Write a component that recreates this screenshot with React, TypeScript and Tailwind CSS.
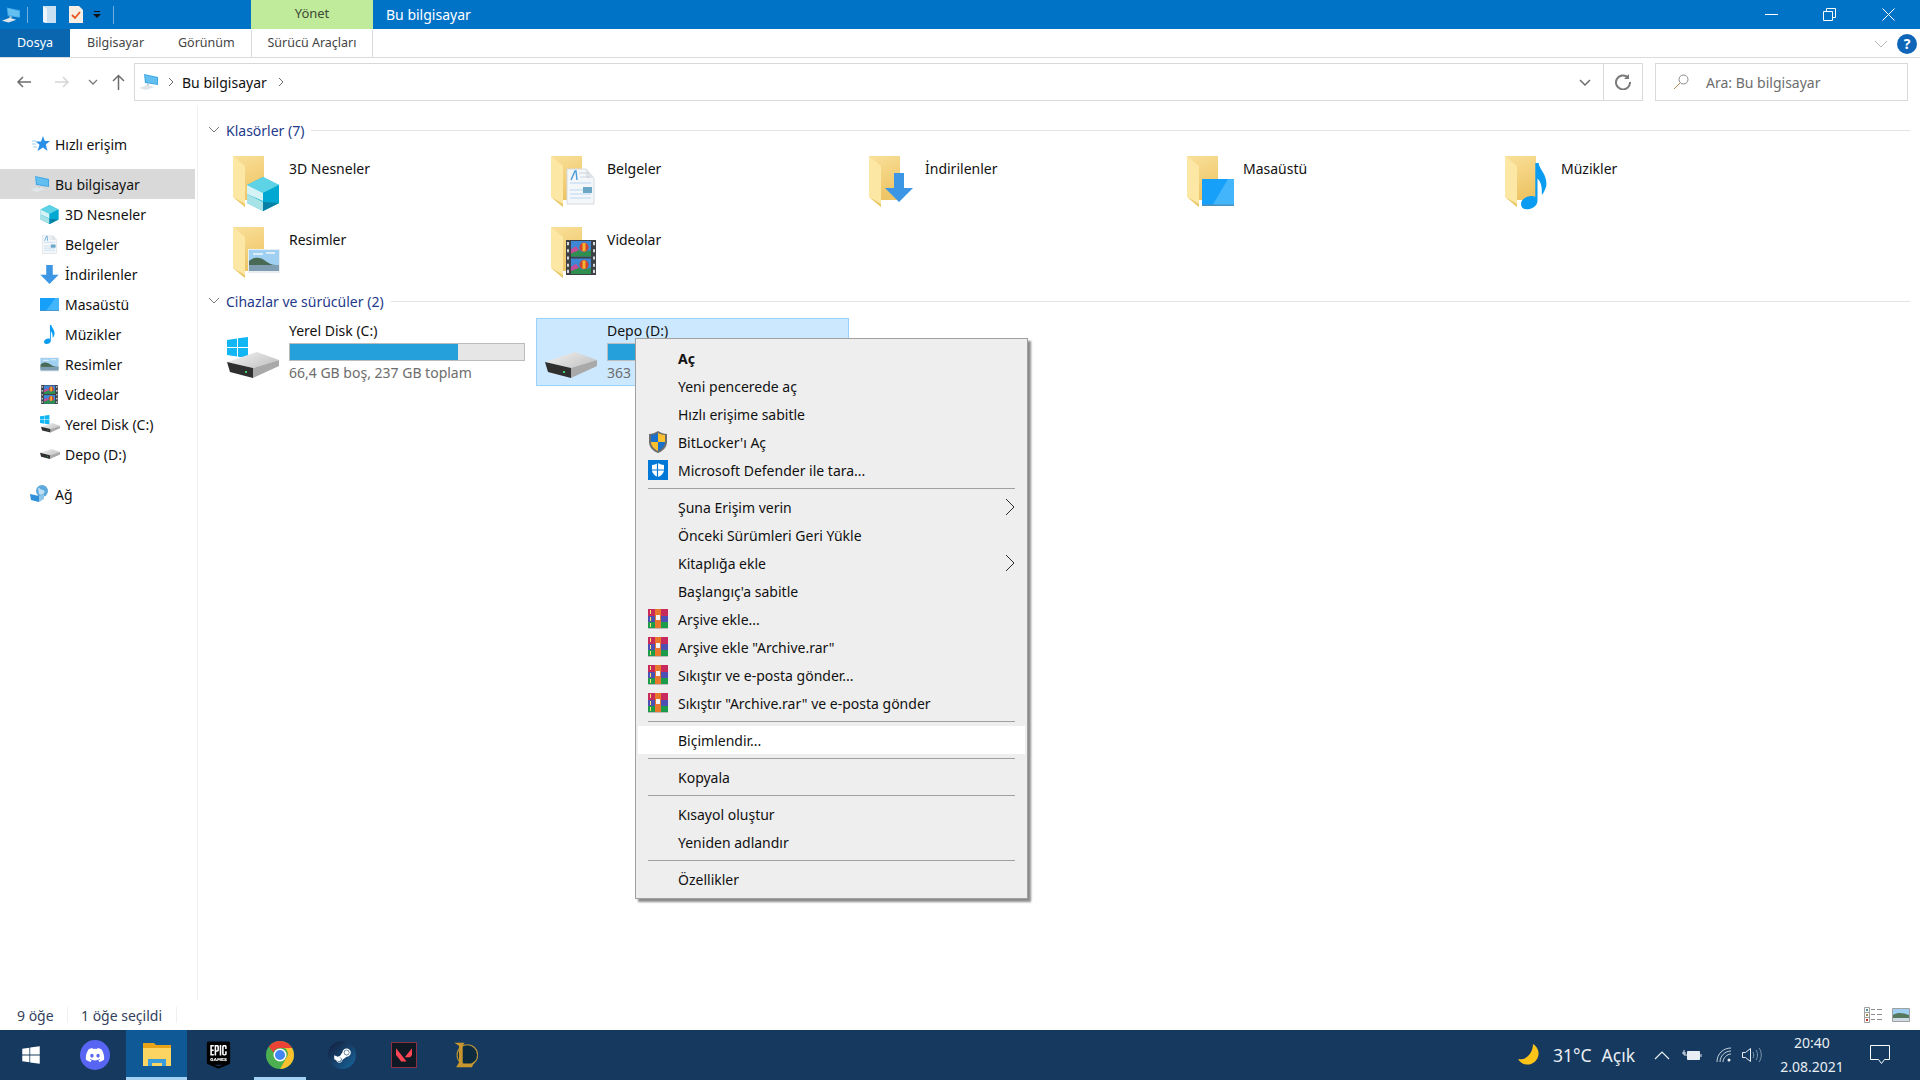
import React from "react";
import { FaWindows, FaDiscord, FaSteamSymbol } from "react-icons/fa";
import { SiEpicgames, SiValorant } from "react-icons/si";

type IconProps = { className?: string };

function FolderBase() {
  return (
    <g>
      <defs>
        <linearGradient id="folderBack" x1="0" y1="0" x2="0.3" y2="1">
          <stop offset="0" stopColor="#f9e09a" />
          <stop offset="1" stopColor="#eec566" />
        </linearGradient>
      </defs>
      <path d="M0 1h31v44H8z" fill="url(#folderBack)" />
      <path d="M0 1l12 10v41L0 42z" fill="#fde7a4" />
      <path d="M0 42l12 10v-3z" fill="#e8c767" />
    </g>
  );
}

function Cube() {
  return (
    <g>
      <path d="M0 8L16 0l16 8v18l-16 8-16-8z" fill="#20b5d6" />
      <path d="M0 8l16 8 16-8L16 0z" fill="#5fd3e6" />
      <path d="M0 8l16 8v8L0 17z" fill="#d5f3f5" />
      <path d="M0 17l16 8v9L0 26z" fill="#a7e3e6" />
      <path d="M16 16l16-8v18l-16 8z" fill="#00a8d2" />
      <path d="M16 25l16 1-16 8z" fill="#0880a6" />
    </g>
  );
}

function Doc() {
  return (
    <g>
      <path d="M0 0h19l8 9v26H0z" fill="#f4f7fa" stroke="#d5d9dd" />
      <path d="M19 0l8 9h-8z" fill="#dfe4e8" />
      <path d="M3 14h21M3 21h13M3 25h21M3 29h21" stroke="#b7d6ee" strokeWidth="1.2" />
      <path d="M4 11l4-9h1l1 9" fill="none" stroke="#4a9bd8" strokeWidth="1.4" />
      <path d="M12 4h10M13 8h10" stroke="#cbd3da" />
      <path d="M16 18h9v6h-9z" fill="#6aa7c7" />
    </g>
  );
}

function DownArrow() {
  return <path d="M9 0h10v15h9L14 29 0 15h9z" fill="#3d96e4" />;
}

function Desktop() {
  return (
    <g>
      <path d="M0 0h32v27H0z" fill="#16a0fa" />
      <path d="M10 27L26 0h6v27z" fill="#43b5fb" />
      <path d="M0 25.500h32V27H0z" fill="#4a8fbe" />
    </g>
  );
}

function Note() {
  return (
    <path
      d="M13 0h3c1 7 8 10 7 21-1 3-2 6-4 8 0-6 0-11-4-15v20c0 5-5 8-10 8-4 0-5-3-5-5 0-4 5-7 9-7 2 0 3 0 4 1z"
      fill="#0a9cf0"
    />
  );
}

function Picture() {
  return (
    <g>
      <path d="M0 0h32v24H0z" fill="#e9eef3" />
      <path d="M1 1h30v21H1z" fill="#9fd0f2" />
      <path d="M5 4h10v2H5zM18 3h9v2h-9z" fill="#dcedf8" />
      <path d="M1 12c6-5 12-4 18 1 4 3 8 3 12 3v3H1z" fill="#496b55" />
      <path d="M1 16h30v6H1z" fill="#7f9db0" />
    </g>
  );
}

function Film() {
  return (
    <g>
      <path d="M0 0h30v34H0z" fill="#3d4045" />
      <path d="M5 1h20v15H5zM5 18h20v15H5z" fill="#3d87d6" />
      <path d="M5 11l6-3 5 4 9-2v6H5zM5 28l6-3 5 4 9-2v6H5z" fill="#2f8f4f" />
      <path d="M5 9l5-3 3 4-8 3zM5 26l5-3 3 4-8 3z" fill="#c44d9a" />
      <circle cx="18" cy="7" r="4.500" fill="#d4432a" />
      <circle cx="18" cy="24" r="4.500" fill="#d4432a" />
      <path d="M16.500 3h3v8h-3zM16.500 20h3v8h-3z" fill="#f2b632" />
      <path d="M1 2h2v3H1zM1 9h2v3H1zM1 16h2v3H1zM1 23h2v3H1zM1 29h2v3H1zM27 2h2v3h-2zM27 9h2v3h-2zM27 16h2v3h-2zM27 23h2v3h-2zM27 29h2v3h-2z" fill="#d8dade" />
    </g>
  );
}

function Folder({ kind }: { kind: string }) {
  return (
    <svg viewBox="0 0 52 56" className="h-[56px] w-[52px] shrink-0">
      <FolderBase />
      {kind === "cube" && (
        <g transform="translate(14 22)">
          <Cube />
        </g>
      )}
      {kind === "doc" && (
        <g transform="translate(16 14)">
          <Doc />
        </g>
      )}
      {kind === "arrow" && (
        <g transform="translate(16 18)">
          <DownArrow />
        </g>
      )}
      {kind === "desktop" && (
        <g transform="translate(15 24)">
          <Desktop />
        </g>
      )}
      {kind === "note" && (
        <g transform="translate(16 8) scale(1.1)">
          <Note />
        </g>
      )}
      {kind === "picture" && (
        <g transform="translate(15 23)">
          <Picture />
        </g>
      )}
      {kind === "film" && (
        <g transform="translate(15 14) scale(1 1.03)">
          <Film />
        </g>
      )}
    </svg>
  );
}

function HddShape() {
  return (
    <g>
      <defs>
        <linearGradient id="hddTop" x1="0" y1="0" x2="1" y2="0.6">
          <stop offset="0" stopColor="#f4f4f4" />
          <stop offset="1" stopColor="#c6c6c6" />
        </linearGradient>
      </defs>
      <path d="M0 10L30 0l22 8-26 8z" fill="url(#hddTop)" />
      <path d="M0 10l26 6v10L3 20z" fill="#2f2f2f" />
      <path d="M26 16l26-8v6L26 26z" fill="#a9a9a9" />
      <rect x="18" y="19" width="2" height="2" fill="#3fd06a" />
    </g>
  );
}

function Hdd({ className }: IconProps) {
  return (
    <svg viewBox="0 0 52 26" className={className}>
      <HddShape />
    </svg>
  );
}

function WinPanes({ x, y, s }: { x: number; y: number; s: number }) {
  return (
    <g transform={`translate(${x} ${y}) scale(${s})`}>
      <path d="M0 3l10-1.500V10H0zM11 1.300L21 0v10H11zM0 11h10v8.500L0 18zM11 11h10v10l-10-1.300z" fill="#12b6f3" />
    </g>
  );
}

function WinDrive() {
  return (
    <svg viewBox="0 0 52 41" className="h-[41px] w-[52px] shrink-0">
      <WinPanes x={0} y={0} s={1} />
      <g transform="translate(0 15)">
        <HddShape />
      </g>
    </svg>
  );
}

function Computer({ className }: IconProps) {
  return (
    <svg viewBox="0 0 20 18" className={className}>
      <path d="M5 1l14 3v8L6 10z" fill="#3fa7e8" />
      <path d="M6 2l12 3v6L7 9z" fill="#62bff0" />
      <path d="M0 15l8-3 7 2-8 3z" fill="#dfe6ea" />
      <path d="M8 10l2 .5v2.500l-2-.5z" fill="#c5ced4" />
    </svg>
  );
}

function Star({ className }: IconProps) {
  return (
    <svg viewBox="0 0 18 16" className={className}>
      <path d="M11 0l1.800 5H18l-4.200 3.600L15.500 15 11 11.500 5.500 15l2-6.200L3.500 5.500H9z" fill="#2a8fe6" />
      <path d="M0 5h4M0 8h4M1 11h4" stroke="#9fd0f2" strokeWidth="1" />
    </svg>
  );
}

function Network({ className }: IconProps) {
  return (
    <svg viewBox="0 0 20 18" className={className}>
      <circle cx="12" cy="6" r="6" fill="#5da9dc" />
      <path d="M8 3c2 0 3 2 5 2s2 3 0 4-3 1-4 0z" fill="#bfe0f4" />
      <path d="M0 9l9 2v6l-8-2z" fill="#2f8fd8" />
      <path d="M9 11l5-2v5l-5 3z" fill="#8fc5e8" />
    </svg>
  );
}

function NavGlyph({ kind }: { kind: string }) {
  const box: Record<string, [string, React.ReactNode]> = {
    cube: ["0 0 32 34", <Cube key="c" />],
    doc: ["-3 0 33 36", <Doc key="d" />],
    arrow: ["0 0 28 29", <DownArrow key="a" />],
    note: ["-6 0 36 42", <Note key="n" />],
    picture: ["0 0 32 24", <Picture key="p" />],
    film: ["0 0 30 34", <Film key="f" />],
  };
  if (kind === "desktop") {
    return (
      <svg viewBox="0 0 32 27" preserveAspectRatio="none" className="h-[13px] w-[19px]">
        <Desktop />
      </svg>
    );
  }
  if (kind === "win") {
    return (
      <svg viewBox="0 0 20 18" className="h-[18px] w-[20px]">
        <WinPanes x={0} y={0} s={0.45} />
        <g transform="translate(1 8) scale(0.37)">
          <HddShape />
        </g>
      </svg>
    );
  }
  if (kind === "drive") return <Hdd className="h-[10px] w-[20px]" />;
  const [viewBox, glyph] = box[kind];
  return (
    <svg viewBox={viewBox} className="h-[19px] w-[19px]">
      {glyph}
    </svg>
  );
}

function NavRow({ label, kind }: { label: string; kind: string }) {
  return (
    <div className="flex h-[30px] items-center pl-[40px]">
      <span className="flex w-[25px] items-center">
        <NavGlyph kind={kind} />
      </span>
      <span>{label}</span>
    </div>
  );
}

function Sidebar() {
  const rows = [
    ["3D Nesneler", "cube"],
    ["Belgeler", "doc"],
    ["İndirilenler", "arrow"],
    ["Masaüstü", "desktop"],
    ["Müzikler", "note"],
    ["Resimler", "picture"],
    ["Videolar", "film"],
    ["Yerel Disk (C:)", "win"],
    ["Depo (D:)", "drive"],
  ];
  return (
    <aside className="w-[198px] shrink-0 border-r border-[#f0f0f0] pt-[23px] pr-[2px]">
      <div className="flex h-[30px] items-center pl-[32px]">
        <Star className="mr-[5px] h-[16px] w-[18px]" />
        <span>Hızlı erişim</span>
      </div>
      <div className="mt-[10px] flex h-[30px] items-center bg-[#d9d9d9] pl-[30px]">
        <Computer className="mr-[5px] h-[18px] w-[20px]" />
        <span>Bu bilgisayar</span>
      </div>
      {rows.map(([label, kind]) => (
        <NavRow key={label} label={label} kind={kind} />
      ))}
      <div className="mt-[10px] flex h-[30px] items-center pl-[30px]">
        <Network className="mr-[5px] h-[18px] w-[20px]" />
        <span>Ağ</span>
      </div>
    </aside>
  );
}

function GroupHeader({ title }: { title: string }) {
  return (
    <div className="flex h-[24px] items-center">
      <svg viewBox="0 0 12 8" className="mr-[6px] h-[8px] w-[12px]">
        <path d="M1 1l5 5 5-5" fill="none" stroke="#7a7a7a" />
      </svg>
      <span className="text-[#1e3a8a]">{title}</span>
      <div className="ml-[7px] h-px flex-1 bg-[#e3e3e3]" />
    </div>
  );
}

function FolderTile({ name, kind }: { name: string; kind: string }) {
  return (
    <div className="flex h-[71px] w-[312px] pt-[13px] pl-[15px]">
      <Folder kind={kind} />
      <span className="ml-[4px] mt-[4px] leading-[20px]">{name}</span>
    </div>
  );
}

function DriveTile({
  name,
  sub,
  used,
  selected,
}: {
  name: string;
  sub: string;
  used: number;
  selected?: boolean;
}) {
  return (
    <div
      className={
        selected
          ? "flex h-[68px] w-[313px] items-stretch border border-[#99d1ff] bg-[#cce8ff]"
          : "flex h-[68px] w-[313px] items-stretch border border-transparent"
      }
    >
      <div className="flex w-[70px] shrink-0 items-end justify-end pr-[10px] pb-[7px]">
        {selected ? <Hdd className="h-[26px] w-[52px]" /> : <WinDrive />}
      </div>
      <div className="w-[236px] pt-[2px]">
        <div className="h-[22px] leading-[20px]">{name}</div>
        <div className="h-[18px] border border-[#bcbcbc] bg-[#e6e6e6]">
          <div className="h-full bg-[#26a0da]" style={{ width: `${used}%` }} />
        </div>
        <div className="mt-[2px] leading-[20px] text-[#6d6d6d]">{sub}</div>
      </div>
    </div>
  );
}

function ShieldUac() {
  return (
    <svg viewBox="0 0 20 22" className="h-[22px] w-[20px]">
      <path d="M10 0c3 2 6 3 9 3v8c0 5-4 9-9 11-5-2-9-6-9-11V3c3 0 6-1 9-3z" fill="#6d6d6d" />
      <path d="M10 2v9H3V4c2 0 5-1 7-2z" fill="#1a6fc9" />
      <path d="M10 2c2 1 5 2 7 2v7h-7z" fill="#fbc02d" />
      <path d="M3 11h7v9c-4-2-7-5-7-9z" fill="#fbc02d" />
      <path d="M10 11h7c0 4-3 7-7 9z" fill="#1a6fc9" />
    </svg>
  );
}

function Defender() {
  return (
    <svg viewBox="0 0 20 20" className="h-[20px] w-[20px]">
      <rect width="20" height="20" fill="#0078d7" />
      <path d="M10 3c2 1 4 2 6 2v5c0 3-3 6-6 7-3-1-6-4-6-7V5c2 0 4-1 6-2z" fill="#fff" />
      <path d="M9.500 3v14M4 10h12" stroke="#0078d7" strokeWidth="1.200" />
    </svg>
  );
}

function RarIcon() {
  return (
    <svg viewBox="0 0 20 20" className="h-[20px] w-[20px]">
      <rect y="0" width="20" height="7" fill="#c92a5c" />
      <rect y="7" width="20" height="6" fill="#4d4fb3" />
      <rect y="13" width="20" height="6" fill="#1c9b4b" />
      <rect x="7" width="6" height="19" fill="#e8762b" />
      <path d="M8 6h4v5H8z" fill="#f4f4f4" />
      <path d="M2 1h1v4H2zM2 8h1v4H2zM2 14h1v4H2z" fill="#f5e36a" />
      <rect y="19" width="20" height="1" fill="#bdbdbd" />
    </svg>
  );
}

type MenuEntry = {
  label?: string;
  icon?: "uac" | "def" | "rar";
  sub?: boolean;
  bold?: boolean;
  hover?: boolean;
};

const menuItems: MenuEntry[] = [
  { label: "Aç", bold: true },
  { label: "Yeni pencerede aç" },
  { label: "Hızlı erişime sabitle" },
  { label: "BitLocker'ı Aç", icon: "uac" },
  { label: "Microsoft Defender ile tara...", icon: "def" },
  {},
  { label: "Şuna Erişim verin", sub: true },
  { label: "Önceki Sürümleri Geri Yükle" },
  { label: "Kitaplığa ekle", sub: true },
  { label: "Başlangıç'a sabitle" },
  { label: "Arşive ekle...", icon: "rar" },
  { label: 'Arşive ekle "Archive.rar"', icon: "rar" },
  { label: "Sıkıştır ve e-posta gönder...", icon: "rar" },
  { label: 'Sıkıştır "Archive.rar" ve e-posta gönder', icon: "rar" },
  {},
  { label: "Biçimlendir...", hover: true },
  {},
  { label: "Kopyala" },
  {},
  { label: "Kısayol oluştur" },
  { label: "Yeniden adlandır" },
  {},
  { label: "Özellikler" },
];

function ContextMenu() {
  return (
    <div className="absolute top-[338px] left-[635px] w-[393px] border border-[#a0a0a0] bg-[#eeeeee] pt-[5px] pr-[2px] pb-[5px] pl-[2px] shadow-[3px_3px_2px_rgba(0,0,0,0.45)]">
      {menuItems.map((item, i) =>
        item.label ? (
          <div
            key={i}
            className={
              item.hover
                ? "flex h-[28px] items-center bg-white pr-[10px] pl-[10px]"
                : "flex h-[28px] items-center pr-[10px] pl-[10px]"
            }
          >
            <span className="flex w-[30px] items-center">
              {item.icon === "uac" && <ShieldUac />}
              {item.icon === "def" && <Defender />}
              {item.icon === "rar" && <RarIcon />}
            </span>
            <span className={item.bold ? "flex-1 font-bold" : "flex-1"}>{item.label}</span>
            {item.sub && (
              <svg viewBox="0 0 10 18" className="h-[18px] w-[10px]">
                <path d="M1 1l8 8-8 8" fill="none" stroke="#2b2b2b" />
              </svg>
            )}
          </div>
        ) : (
          <div key={i} className="h-[9px] px-[10px] pt-[4px]">
            <div className="h-px bg-[#a0a0a0]" />
          </div>
        )
      )}
    </div>
  );
}

function TitleBar() {
  return (
    <div className="flex h-[29px] items-stretch bg-[#0173c7] text-white">
      <div className="flex w-[251px] items-center pl-[2px]">
        <Computer className="h-[18px] w-[19px]" />
        <div className="ml-[6px] h-[16px] w-px bg-[#6fb0e0]" />
        <svg viewBox="0 0 13 17" className="ml-[15px] h-[17px] w-[13px]">
          <path d="M0 0h13v17H3l-3-1z" fill="#c9e0f3" />
          <path d="M0 0l4 3v14L0 16z" fill="#eef6fc" />
        </svg>
        <svg viewBox="0 0 14 17" className="ml-[13px] h-[17px] w-[14px]">
          <path d="M0 0h10l4 4v13H0z" fill="#f7efe4" />
          <path d="M3 9l3 3 5-6" fill="none" stroke="#e8541e" strokeWidth="1.800" />
        </svg>
        <svg viewBox="0 0 8 8" className="ml-[10px] h-[8px] w-[8px]">
          <path d="M1 0h6v1H1zM0 3h8L4 7z" fill="#111" />
        </svg>
        <div className="ml-[12px] h-[18px] w-px bg-[#6fb0e0]" />
      </div>
      <div className="flex w-[122px] items-center justify-center bg-[#bfeb9b] pb-[2px] text-[13px] text-[#3d4a35]">Yönet</div>
      <div className="flex items-center pl-[13px]">Bu bilgisayar</div>
      <div className="ml-auto flex items-center">
        <svg viewBox="0 0 13 13" className="h-[13px] w-[13px]">
          <path d="M0 6.500h13" stroke="#fff" />
        </svg>
        <svg viewBox="0 0 13 13" className="ml-[45px] h-[13px] w-[13px]">
          <path d="M.5 3.500h9v9h-9zM3.500 3.500v-3h9v9h-3" fill="none" stroke="#fff" />
        </svg>
        <svg viewBox="0 0 13 13" className="mr-[25px] ml-[46px] h-[13px] w-[13px]">
          <path d="M.5.500l12 12M12.500.500l-12 12" stroke="#fff" />
        </svg>
      </div>
    </div>
  );
}

function RibbonTabs() {
  return (
    <div className="flex h-[29px] items-stretch border-b border-[#dadbdc] pt-[1px] text-[12.5px] text-[#444]">
      <div className="-mt-[1px] flex w-[70px] items-center justify-center bg-[#0b66b0] pt-[1px] text-white">Dosya</div>
      <div className="flex w-[108px] items-center pl-[17px]">Bilgisayar</div>
      <div className="flex w-[73px] items-center">Görünüm</div>
      <div className="flex w-[122px] items-center justify-center border-x border-[#dadbdc]">Sürücü Araçları</div>
      <div className="ml-auto flex items-center">
        <svg viewBox="0 0 14 8" className="h-[8px] w-[14px]">
          <path d="M1 1l6 6 6-6" fill="none" stroke="#b5b5b5" />
        </svg>
        <div className="mr-[3px] ml-[9px] flex h-[20px] w-[20px] items-center justify-center rounded-full bg-[#0f66b8] text-[14px] font-bold text-white">
          ?
        </div>
      </div>
    </div>
  );
}

function AddressRow() {
  return (
    <div className="flex h-[48px] items-center pr-[12px]">
      <div className="flex w-[134px] items-center pl-[16px]">
        <svg viewBox="0 0 16 14" className="h-[14px] w-[16px]">
          <path d="M15 7H2M7 2L2 7l5 5" fill="none" stroke="#6d6d6d" strokeWidth="1.500" />
        </svg>
        <svg viewBox="0 0 16 14" className="ml-[22px] h-[14px] w-[16px]">
          <path d="M1 7h13M9 2l5 5-5 5" fill="none" stroke="#d5d5d5" strokeWidth="1.500" />
        </svg>
        <svg viewBox="0 0 10 6" className="ml-[18px] h-[6px] w-[10px]">
          <path d="M1 1l4 4 4-4" fill="none" stroke="#7a7a7a" strokeWidth="1.300" />
        </svg>
        <svg viewBox="0 0 13 16" className="ml-[14px] h-[16px] w-[13px]">
          <path d="M6.500 16V2M1 7l5.500-5.500L12 7" fill="none" stroke="#6d6d6d" strokeWidth="1.500" />
        </svg>
      </div>
      <div className="flex h-[38px] w-[1509px] items-center border border-[#d9d9d9] pl-[4px]">
        <Computer className="h-[18px] w-[20px]" />
        <svg viewBox="0 0 6 10" className="ml-[9px] h-[10px] w-[6px]">
          <path d="M1 1l4 4-4 4" fill="none" stroke="#6d6d6d" />
        </svg>
        <span className="ml-[8px]">Bu bilgisayar</span>
        <svg viewBox="0 0 6 10" className="ml-[11px] h-[10px] w-[6px]">
          <path d="M1 1l4 4-4 4" fill="none" stroke="#6d6d6d" />
        </svg>
        <svg viewBox="0 0 12 7" className="mr-[12px] ml-auto h-[7px] w-[12px]">
          <path d="M1 1l5 5 5-5" fill="none" stroke="#6d6d6d" strokeWidth="1.500" />
        </svg>
        <div className="flex h-full w-[39px] items-center justify-center border-l border-[#d9d9d9]">
          <svg viewBox="0 0 16 16" className="h-[16px] w-[16px]">
            <path d="M13 3.500A7 7 0 1 0 15 8" fill="none" stroke="#7a7a7a" strokeWidth="2" />
            <path d="M14 0v5H9z" fill="#7a7a7a" />
          </svg>
        </div>
      </div>
      <div className="ml-[12px] flex h-[38px] flex-1 items-center border border-[#d9d9d9] pl-[17px] text-[#6d6d6d]">
        <svg viewBox="0 0 16 16" className="h-[16px] w-[16px]">
          <circle cx="10.500" cy="5.500" r="4.500" fill="none" stroke="#8a8a8a" />
          <path d="M7 9l-6 6" stroke="#b58a5a" />
        </svg>
        <span className="ml-[17px]">Ara: Bu bilgisayar</span>
      </div>
    </div>
  );
}

function StatusBar() {
  return (
    <div className="flex h-[30px] items-center pl-[17px] pr-[10px] text-[#33415c]">
      <span className="w-[50px]">9 öğe</span>
      <span className="h-[16px] w-px bg-[#f0f0f0]" />
      <span className="ml-[13px] w-[95px]">1 öğe seçildi</span>
      <span className="h-[16px] w-px bg-[#f0f0f0]" />
      <svg viewBox="0 0 18 16" className="ml-auto h-[16px] w-[18px]">
        <path d="M.5.500h5v15h-5zM.5 5.500h5M.5 10.500h5" fill="none" stroke="#a0a0a0" />
        <path d="M2 2h2v2H2z" fill="#4a90a0" />
        <path d="M2 7h2v2H2z" fill="#9a8a50" />
        <path d="M2 12h2v2H2z" fill="#c03020" />
        <path d="M7 2.500h4M13 2.500h5M7 7.500h4M13 7.500h5M7 12.500h4M13 12.500h5" stroke="#8a8a8a" />
      </svg>
      <svg viewBox="0 0 18 14" className="ml-[10px] h-[14px] w-[18px]">
        <path d="M.5.500h17v13H.5z" fill="#9fd0f2" stroke="#a0a0a0" />
        <path d="M1 7c5-3 10-2 16 0v3H1z" fill="#55785f" />
        <path d="M1 10h16v3H1z" fill="#cfdce6" />
      </svg>
    </div>
  );
}

function Chrome() {
  return (
    <svg viewBox="0 0 28 28" className="h-[28px] w-[28px]">
      <circle cx="14" cy="14" r="14" fill="#4caf50" />
      <path d="M14 0a14 14 0 0 1 12.100 7H14a7 7 0 0 0-6.500 4.400L2.800 5.600A14 14 0 0 1 14 0z" fill="#ea4335" />
      <path d="M26.100 7A14 14 0 0 1 14 28l6-10.500A7 7 0 0 0 19 7z" fill="#fbc02d" />
      <circle cx="14" cy="14" r="6.500" fill="#fff" />
      <circle cx="14" cy="14" r="5" fill="#4285f4" />
    </svg>
  );
}

function Explorer() {
  return (
    <svg viewBox="0 0 28 24" className="h-[24px] w-[28px]">
      <path d="M0 0h11l2 2h15v4H0z" fill="#e8a317" />
      <path d="M0 5h28v18H0z" fill="#fcd462" />
      <path d="M5 16h18v7h-4v-3H9v3H5z" fill="#3b9cdc" />
    </svg>
  );
}

function League() {
  return (
    <svg viewBox="0 0 26 30" className="mr-[2px] h-[28px] w-[25px]">
      <circle cx="15" cy="15" r="11" fill="#0d2b3e" stroke="#b8923a" strokeWidth="1.200" />
      <path d="M1 2h11l-2 3v19h10l3-3-3 7H3l3-5V5z" fill="#c8962f" />
    </svg>
  );
}

function TaskButton({
  active,
  open,
  wide,
  children,
}: {
  active?: boolean;
  open?: boolean;
  wide?: boolean;
  children: React.ReactNode;
}) {
  return (
    <div
      className={
        active
          ? "relative flex h-full w-[61px] items-center justify-center bg-[#0f5a96]"
          : wide
            ? "relative flex h-full w-[63px] items-center justify-center"
            : "relative flex h-full w-[62px] items-center justify-center"
      }
    >
      {children}
      {(active || open) && (
        <div className={active ? "absolute inset-x-0 bottom-0 h-[3px] bg-[#a3d2f5]" : "absolute inset-x-[5px] bottom-0 h-[3px] bg-[#a3d2f5]"} />
      )}
    </div>
  );
}

function Taskbar() {
  return (
    <div className="flex h-[50px] items-center bg-[#163a5f] text-[#e8eef4]">
      <div className="flex h-full w-[63px] items-center justify-center pr-[2px]">
        <FaWindows className="h-[20px] w-[20px] text-white" />
      </div>
      <TaskButton wide>
        <div className="flex h-[30px] w-[30px] items-center justify-center rounded-full bg-[#5865f2]">
          <FaDiscord className="h-[20px] w-[20px] text-white" />
        </div>
      </TaskButton>
      <TaskButton active>
        <Explorer />
      </TaskButton>
      <TaskButton>
        <div className="relative flex h-[30px] w-[27px] items-center justify-center">
          <div className="absolute inset-x-[4px] top-[3px] h-[19px] bg-white" />
          <SiEpicgames className="relative h-[30px] w-[27px] text-black" />
        </div>
      </TaskButton>
      <TaskButton open>
        <Chrome />
      </TaskButton>
      <TaskButton>
        <div className="flex h-[28px] w-[28px] items-center justify-center rounded-full bg-gradient-to-br from-[#111d3a] to-[#1368a0]">
          <FaSteamSymbol className="h-[19px] w-[19px] text-white" />
        </div>
      </TaskButton>
      <TaskButton>
        <div className="flex h-[26px] w-[26px] items-center justify-center border border-[#8c2f45] bg-[#0f1923]">
          <SiValorant className="h-[16px] w-[16px] text-[#ff4655]" />
        </div>
      </TaskButton>
      <TaskButton>
        <League />
      </TaskButton>
      <div className="ml-auto flex h-full items-center text-[17.5px]">
        <svg viewBox="0 0 24 24" className="h-[24px] w-[24px]">
          <path d="M16 1a11 11 0 1 1-15 15c7 2 15-5 15-15z" fill="#fcc419" />
        </svg>
        <span className="ml-[12px]">31°C</span>
        <span className="ml-[10px]">Açık</span>
        <svg viewBox="0 0 16 9" className="ml-[19px] h-[9px] w-[16px]">
          <path d="M1 8l7-7 7 7" fill="none" stroke="#e8eef4" strokeWidth="1.200" />
        </svg>
        <svg viewBox="0 0 20 12" className="ml-[12px] h-[12px] w-[20px]">
          <path d="M5.500 2.500h12v8h-12z" fill="#e8eef4" stroke="#e8eef4" />
          <path d="M19 5v3" stroke="#e8eef4" />
          <path d="M0 4h4M2 1v5M2 6h3" fill="none" stroke="#e8eef4" />
        </svg>
        <svg viewBox="0 0 16 16" className="ml-[14px] h-[16px] w-[16px]">
          <path d="M1 15C1 7 7 1 15 1M4 15c0-6 5-11 11-11M7 15c0-4 4-8 8-8" fill="none" stroke="#c5d2dd" />
          <circle cx="13" cy="13" r="1.500" fill="#e8eef4" />
        </svg>
        <svg viewBox="0 0 20 16" className="ml-[10px] h-[16px] w-[20px]">
          <path d="M.5 5.500h3l5-4v13l-5-4h-3z" fill="none" stroke="#e8eef4" />
          <path d="M11 5c1 2 1 4 0 6M14 3c2 3 2 7 0 10M17 1c3 4 3 10 0 14" fill="none" stroke="#7e96ac" />
        </svg>
        <div className="ml-[15px] flex w-[70px] flex-col items-center text-[14px] leading-[24px]">
          <span>20:40</span>
          <span>2.08.2021</span>
        </div>
        <svg viewBox="0 0 20 20" className="mr-[30px] ml-[23px] h-[20px] w-[20px]">
          <path d="M.5.500h19v14h-5l-3 4-3-4h-8z" fill="none" stroke="#fff" />
        </svg>
      </div>
    </div>
  );
}

const folders = [
  ["3D Nesneler", "cube"],
  ["Belgeler", "doc"],
  ["İndirilenler", "arrow"],
  ["Masaüstü", "desktop"],
  ["Müzikler", "note"],
  ["Resimler", "picture"],
  ["Videolar", "film"],
];

export default function App() {
  return (
    <div className="relative flex h-screen w-[1920px] flex-col overflow-hidden bg-white font-['Noto_Sans','Segoe_UI',sans-serif] text-[14px] text-[#111]">
      <TitleBar />
      <RibbonTabs />
      <AddressRow />
      <div className="flex flex-1">
        <Sidebar />
        <main className="flex-1 pt-[12px] pr-[10px] pl-[10px]">
          <GroupHeader title="Klasörler (7)" />
          <div className="mb-[5px] grid grid-cols-[repeat(5,318px)] pl-[10px]">
            {folders.map(([name, kind]) => (
              <FolderTile key={name} name={name} kind={kind} />
            ))}
          </div>
          <GroupHeader title="Cihazlar ve sürücüler (2)" />
          <div className="mt-[5px] grid grid-cols-[repeat(5,318px)] pl-[10px]">
            <DriveTile name="Yerel Disk (C:)" sub="66,4 GB boş, 237 GB toplam" used={72} />
            <DriveTile name="Depo (D:)" sub="363 GB boş, 465 GB toplam" used={22} selected />
          </div>
        </main>
      </div>
      <StatusBar />
      <Taskbar />
      <ContextMenu />
    </div>
  );
}
